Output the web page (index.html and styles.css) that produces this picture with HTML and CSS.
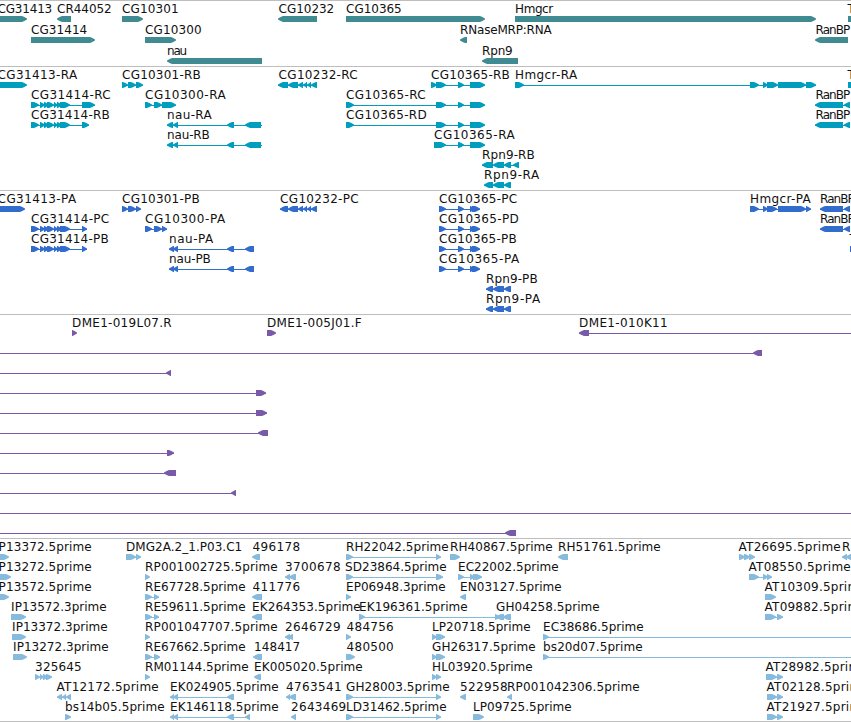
FILE: index.html
```
<!DOCTYPE html>
<html lang="en">
<head>
<meta charset="utf-8">
<title>Genome browser</title>
<link rel="stylesheet" href="styles.css">
</head>
<body>
<main class="browser">
  <section class="track track-gene" data-track="gene" data-pitch="21"></section>
  <section class="track track-transcript" data-track="transcript" data-pitch="20"></section>
  <section class="track track-protein" data-track="protein" data-pitch="20"></section>
  <section class="track track-bac" data-track="bac" data-pitch="20"></section>
  <section class="track track-est" data-track="est" data-pitch="20"></section>
</main>
<script src="tracks.js"></script>
</body>
</html>
```
FILE: styles.css
```
* { box-sizing: border-box; }
html, body { margin: 0; background: #fff; overflow: hidden; }
.browser {
  display: grid;
  grid-template-rows: 66px 124px 124px 224px 184px;
  width: 851px;
  height: 722px;
}
.track {
  border-top: 1px solid #bebebe;
  overflow: hidden;
}
.track-est { border-bottom: 1px solid #bebebe; }
.track-gene { color: #3f8b91; }
.track-transcript { color: #009ebe; }
.track-protein { color: #326ccc; }
.track-bac { color: #785aa8; }
.track-est { color: #87bbde; }
.features { display: block; width: 100%; height: 100%; }
.glyph { fill: currentColor; }
.intron { fill: currentColor; shape-rendering: crispEdges; }
.label {
  fill: #111;
  font-family: "DejaVu Sans", sans-serif;
  font-size: 12px;
}
```
FILE: tracks.js
```
// One feature per line: row | label | label left | label right | strand | exons | optional line extent
const tracks = {
gene: `
0|CG31413|-2|52|+|-5-27
0|CR44052|57.5|111.5|-|57-71
0|CG10301|122.5|178.5|+|122-143
0|CG10232|279|334|-|278-317
0|CG10365|346.5|401.5|+|346-485
0|Hmgcr|515.5|553|+|515-816
0|T|848|856|+|848-860
1|CG31414|31.5|87|+|31-95
1|CG10300|145.5|201.5|+|145-176
1|RNaseMRP:RNA|460.5|551.5|-|460-467
1|RanBP|816|850|-|815-848
2|nau|167.5|187|-|167-262
2|Rpn9|482.5|512.5|-|482-518`,
transcript: `
0|CG31413-RA|-2|77|+|-5-27
0|CG10301-RB|122.5|200.5|+|122-128,128-136,136-143
0|CG10232-RC|279|357.5|-|278-288,288-298,298-303,303-307,307-311,311-317
0|CG10365-RB|431.5|509.5|+|431-437,436-446,458-464,470-485
0|Hmgcr-RA|515.5|577|+|515-524,750-759,763-768,767-778,778-806,806-816
0|T|848|856|+|848-856
1|CG31414-RC|31.5|110.5|+|31-39,40-45,44-49,47-54,54-58,57-62,60-70,82-95
1|CG10300-RA|145.5|225.5|+|145-152,154-162,162-176
1|CG10365-RC|346.5|425.5|+|346-354,436-446,458-464,470-485
1|RanBP|816|850|-|815-843,844-850
2|CG31414-RB|31.5|109.5|+|31-39,40-45,44-49,47-54,54-58,57-62,60-70,82-89
2|nau-RA|167.5|211.5|-|167-173,173-178,227-234,245-261|167-262
2|CG10365-RD|346.5|426.5|+|346-354,436-446,458-464,470-485
2|RanBP|816|850|-|815-843,844-850
3|nau-RB|167.5|209.5|-|167-173,173-178,227-234,245-261|167-262
3|CG10365-RA|434.5|514.5|+|434-446,458-464,470-485
4|Rpn9-RB|482.5|534.5|-|482-493,493-504,504-511,513-519
5|Rpn9-RA|484.5|539|-|484-493,493-504,504-511`,
protein: `
0|CG31413-PA|-2|76|+|-5-25
0|CG10301-PB|122.5|199.5|+|122-128,128-136,136-141
0|CG10232-PC|280.5|358.5|-|280-288,288-298,298-303,303-307,307-311,311-317
0|CG10365-PC|439.5|517|+|439-446,458-464,470-475,472-480
0|Hmgcr-PA|750.5|810.5|+|750-759,763-768,767-777,778-806,806-811
0|RanBP|820.5|854.5|-|820-843,844-850
1|CG31414-PC|31.5|109|+|31-39,40-45,44-49,47-54,54-58,57-62,60-70,82-87
1|CG10300-PA|145.5|225|+|145-152,154-162,162-167
1|CG10365-PD|439.5|518.5|+|439-446,458-464,470-475,472-480
1|RanBP|820.5|854.5|-|820-843,844-850
2|CG31414-PB|31.5|108.5|+|31-39,40-45,44-49,47-54,54-58,57-62,60-70,82-87
2|nau-PA|169.5|213|-|169-174,173-178,227-234,245-254
2|CG10365-PB|439.5|516.5|+|439-446,458-464,470-475,472-480
2|T|850|858|+|850-860
3|nau-PB|169.5|210.5|-|169-174,173-178,227-234,245-254
3|CG10365-PA|439.5|519|+|439-446,458-464,470-475,472-480
4|Rpn9-PB|486.5|537.5|-|486-493,493-504,504-511
5|Rpn9-PA|486.5|540|-|486-493,493-504,504-511`,
bac: `
0|DME1-019L07.R|72.5|171.5|+|72-77
0|DME1-005J01.F|267.5|361.5|+|267-276
0|DME1-010K11|579.5|667.5|-|579-589|579-851
1||||-|753-762|0-762
2||||-|166-171|0-171
3||||+|256-266|0-266
4||||+|256-267|0-267
5||||-|258-268|0-268
6||||+|167-174|0-174
7||||-|164-176|0-176
8||||-|231-236|0-236
9||||-||0-851
10||||-|505-516|0-516`,
est: `
0|P13372.5prime|-1|91.5|+|-5-9
0|DMG2A.2_1.P03.C1|126.5|242|+|126-136,136-141
0|496178|253|300|-|252-260
0|RH22042.5prime|346.5|448.5|+|346-353,436-441
0|RH40867.5prime|450.5|552.5|+|450-460
0|RH51761.5prime|558.5|660.5|-|558-568
0|AT26695.5prime|739|840.5|+|739-745,744-750,749-755
0|R|842.5|850|-|842-847,846-851
1|P13272.5prime|-1|91.5|+|-5-11
1|RP001002725.5prime|145.5|277.5|+|145-150
1|3700678|285.5|340.5|-|285-290,289-296
1|SD23864.5prime|345.5|446.5|+|346-353,436-443
1|EC22002.5prime|458.5|558.5|+|458-464,470-475,473-482
1|AT08550.5prime|749|850.5|+|749-759,763-768,767-772
2|P13572.5prime|-1|91.5|+|-5-9
2|RE67728.5prime|145.5|245.5|+|145-152,154-159
2|411776|253|300|-|252-262
2|EP06948.3prime|346.5|445.5|+|346-351
2|EN03127.5prime|460.5|561.5|-|460-466
2|AT10309.5prime|765|866.5|+|765-776
3|IP13572.3prime|11.5|106.5|+|11-26
3|RE59611.5prime|145.5|245.5|+|145-152,154-159
3|EK264353.5prime|252.5|360.5|-|252-262
3|EK196361.5prime|359.5|467.5|+|359-365,495-500
3|GH04258.5prime|496.5|599.5|-|496-504,503-511
3|AT09882.5prime|765|866.5|+|765-776,777-783
4|IP13372.3prime|12.5|107.5|+|12-26
4|RP001047707.5prime|145.5|277.5|+|145-150
4|2646729|285.5|340.5|-|285-290,288-293
4|484756|347|393.5|+|346-351
4|LP20718.5prime|432.5|530.5|+|432-437,436-445
4|EC38686.5prime|543.5|643.5|+|543-549|543-851
5|IP13272.3prime|13.5|108.5|+|13-27
5|RE67662.5prime|145.5|245.5|+|145-152,154-160
5|148417|254.5|300|-|253-262
5|480500|347|393.5|+|346-355
5|GH26317.5prime|432.5|535.5|+|432-437,436-445
5|bs20d07.5prime|543.5|642.5|+|543-549|543-851
6|325645|35.5|81.5|+|35-40,40-44,43-48,46-52
6|RM01144.5prime|145.5|248.5|+|145-150
6|EK005020.5prime|254.5|362.5|-|254-261
6|HL03920.5prime|432.5|532.5|+|432-437,436-441
6|AT28982.5prime|766|867.5|+|766-777,777-783
7|AT12172.5prime|57|158.5|-|57-62,62-66,66-71
7|EK024905.5prime|170.5|278.5|-|170-174,173-178,227-234
7|4763541|286.5|341.5|-|286-290,289-296
7|GH28003.5prime|346.5|449.5|+|346-353,436-441
7|522958|460.5|507.5|-|460-466
7|RP001042306.5prime|507.5|639.5|-|507-512
7|AT02128.5prime|767|868.5|+|767-777,777-783
8|bs14b05.5prime|65.5|164.5|+|65-71
8|EK146118.5prime|170.5|278.5|-|170-174,173-178,227-234,245-250
8|2643469|291.5|346|-|291-296
8|LD31462.5prime|346.5|446.5|+|346-353,436-441
8|LP09725.5prime|473.5|571.5|+|473-484
8|AT21927.5prime|767|868.5|+|767-777,777-783`
};

const NS = "http://www.w3.org/2000/svg";
function add(parent, name, attrs) {
  const el = document.createElementNS(NS, name);
  for (const key in attrs) el.setAttribute(key, attrs[key]);
  parent.appendChild(el);
  return el;
}
function range(text) {
  const m = text.match(/^(-?[\d.]+)-([\d.]+)$/);
  return [Number(m[1]), Number(m[2])];
}

document.querySelectorAll(".track").forEach(section => {
  const svg = add(section, "svg", { class: "features" });
  tracks[section.dataset.track].trim().split("\n").forEach(line => {
    const [row, label, left, right, strand, exonText, extent] = line.split("|");
    const y = Number(row) * section.dataset.pitch + 15;
    const exons = exonText ? exonText.split(",").map(range) : [];
    const [a, b] = extent ? range(extent) : [exons[0][0], exons[exons.length - 1][1]];
    if (extent || exons.length > 1) {
      add(svg, "rect", { class: "intron", x: a, y: y + 3, width: b - a, height: 1 });
    }
    exons.forEach(([s, e]) => {
      const base = strand === "+" ? s : e;
      const tip = strand === "+" ? e : s;
      const d = strand === "+" ? 1 : -1;
      const neck = tip - d * Math.min(5, e - s - 0.6);
      add(svg, "path", {
        class: "glyph",
        d: `M${base} ${y}H${neck}L${tip - d * 2.6} ${y + 1.1}L${tip} ${y + 2.4}V${y + 3.4}L${tip - d * 2.6} ${y + 4.9}L${neck} ${y + 6}H${base}Z`
      });
    });
    if (label) {
      const x = Number(left) - 0.4;
      const text = add(svg, "text", {
        class: "label", x, y: y - 3,
        textLength: Number(right) - x + 0.2
      });
      text.textContent = label;
    }
  });
});
```
